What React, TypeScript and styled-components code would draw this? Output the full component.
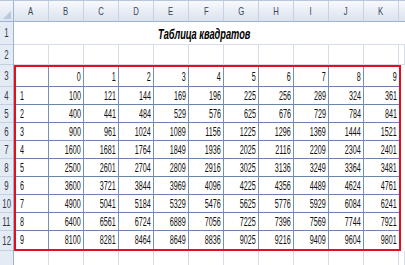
import React from "react"
import styled, { createGlobalStyle } from "styled-components"

const GlobalStyle = createGlobalStyle`
  html, body {
    margin: 0;
    padding: 0;
    background: #ffffff;
    overflow: hidden;
  }
  body {
    font-family: "Liberation Sans", Arial, sans-serif;
  }
`

const Page = styled.div`
  width: 405px;
  height: 265px;
  display: flex;
  flex-direction: column;
  overflow: hidden;
`

const TopStrip = styled.div`
  height: 4px;
  display: flex;
  background: #dfe6ef;
  border-bottom: 1px solid #b7c6da;
  box-sizing: border-box;
`

const NameBox = styled.div`
  width: 90px;
  background: #ffffff;
  border-right: 1px solid #aab9cd;
`

const FxBar = styled.div`
  width: 43px;
  background: #c4d3e6;
`

const Sheet = styled.div`
  flex: 1;
  display: flex;
`

const RowHeaders = styled.div`
  width: 14px;
  display: flex;
  flex-direction: column;
  background: #e4ebf5;
  border-right: 1px solid #9eb3cd;
  box-sizing: border-box;
`

const Corner = styled.div`
  height: 21px;
  position: relative;
  background: linear-gradient(#f4f7fb, #dce4ef);
  border-bottom: 1px solid #9eb3cd;
  box-sizing: border-box;

  &::after {
    content: "";
    position: absolute;
    right: 2px;
    bottom: 2px;
    border-left: 8px solid transparent;
    border-bottom: 8px solid #b9c8da;
  }
`

const RowLabel = styled.div<{ $h: number }>`
  height: ${(p) => p.$h}px;
  flex: none;
  display: flex;
  align-items: center;
  justify-content: center;
  border-bottom: 1px solid #c3d0e1;
  box-sizing: border-box;
  font-size: 12px;
  color: #2f3a48;
`

const Main = styled.div`
  flex: 1;
  display: flex;
  flex-direction: column;
`

const HeaderRow = styled.div`
  height: 21px;
  display: flex;
  background: linear-gradient(#f7f9fc, #dbe3ee);
  border-bottom: 1px solid #9eb3cd;
  box-sizing: border-box;
`

const ColLabel = styled.div`
  width: 35px;
  flex: none;
  display: flex;
  align-items: center;
  justify-content: center;
  border-right: 1px solid #c6d2e2;
  box-sizing: border-box;
  font-size: 11px;
  color: #3a4656;
`

const Row = styled.div<{ $h: number }>`
  height: ${(p) => p.$h}px;
  flex: none;
  display: flex;
`

const Cell = styled.div<{ $w?: number; $left?: boolean; $inside?: boolean; $last?: boolean; $bottom?: boolean }>`
  width: ${(p) => (p.$w ? `${p.$w}px` : "auto")};
  flex: ${(p) => (p.$w ? "none" : "1")};
  display: flex;
  align-items: center;
  justify-content: ${(p) => (p.$left ? "flex-start" : "flex-end")};
  padding: ${(p) => (p.$left ? "0 0 0 4px" : "0 2px 0 0")};
  box-sizing: border-box;
  border-right: ${(p) => (p.$last ? "none" : p.$inside ? "1px solid #7890b4" : "1px solid #d6dde8")};
  border-bottom: ${(p) => (p.$bottom ? "none" : p.$inside ? "1px solid #6a84aa" : "1px solid #d6dde8")};
  font-size: 12px;
  color: #111111;
`

const Squeeze = styled.span<{ $origin: string; $scale?: number }>`
  display: inline-block;
  white-space: nowrap;
  transform: scaleX(${(p) => p.$scale ?? 0.6});
  transform-origin: ${(p) => p.$origin} center;
`

const TitleCell = styled.div`
  height: 23px;
  display: flex;
  align-items: center;
  border-bottom: 1px solid #d6dde8;
  box-sizing: border-box;
  position: relative;
`

const Title = styled.span`
  position: absolute;
  left: 144px;
  top: 4px;
  font-weight: bold;
  font-style: italic;
  font-size: 14px;
  color: #000000;
  white-space: nowrap;
  transform: scaleX(0.66);
  transform-origin: left center;
`

const TableBox = styled.div`
  width: 387px;
  border: 2px solid #e2101c;
  box-sizing: border-box;
  display: flex;
  flex-direction: column;
`

const letters = ["A", "B", "C", "D", "E", "F", "G", "H", "I", "J", "K"]
const digits = [0, 1, 2, 3, 4, 5, 6, 7, 8, 9]
const rowLabels: [string, number][] = [
  ["1", 23],
  ["2", 20],
  ["3", 22],
  ["4", 18],
  ["5", 18],
  ["6", 18],
  ["7", 18],
  ["8", 18],
  ["9", 18],
  ["10", 18],
  ["11", 18],
  ["12", 20],
  ["", 30],
]

const PlainRow = ({ h }: { h: number }) => (
  <Row $h={h}>
    {letters.map((l) => (
      <Cell key={l} $w={35} />
    ))}
    <Cell />
  </Row>
)

const App = () => {
  return (
    <>
      <GlobalStyle />
      <Page>
        <TopStrip>
          <NameBox />
          <FxBar />
        </TopStrip>
        <Sheet>
          <RowHeaders>
            <Corner />
            {rowLabels.map(([label, h], i) => (
              <RowLabel key={i} $h={h}>
                <Squeeze $origin="center" $scale={0.65}>
                  {label}
                </Squeeze>
              </RowLabel>
            ))}
          </RowHeaders>
          <Main>
            <HeaderRow>
              {letters.map((l) => (
                <ColLabel key={l}>
                  <Squeeze $origin="center" $scale={0.7}>
                    {l}
                  </Squeeze>
                </ColLabel>
              ))}
            </HeaderRow>
            <TitleCell>
              <Title>Таблица квадратов</Title>
            </TitleCell>
            <PlainRow h={20} />
            <TableBox>
              <Row $h={20}>
                <Cell $w={33} $inside />
                {digits.map((d) => (
                  <Cell key={d} $w={35} $inside $last={d === 9}>
                    <Squeeze $origin="right">{d}</Squeeze>
                  </Cell>
                ))}
              </Row>
              {digits.slice(1).map((r) => (
                <Row key={r} $h={18}>
                  <Cell $w={33} $left $inside $bottom={r === 9}>
                    <Squeeze $origin="left">{r}</Squeeze>
                  </Cell>
                  {digits.map((d) => (
                    <Cell key={d} $w={35} $inside $last={d === 9} $bottom={r === 9}>
                      <Squeeze $origin="right">{(r * 10 + d) ** 2}</Squeeze>
                    </Cell>
                  ))}
                </Row>
              ))}
            </TableBox>
            <PlainRow h={30} />
          </Main>
        </Sheet>
      </Page>
    </>
  )
}

export default App
